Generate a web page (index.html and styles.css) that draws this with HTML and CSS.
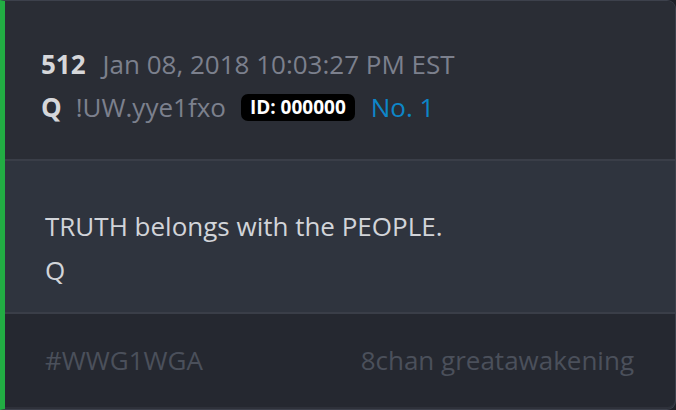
FILE: index.html
```
<!DOCTYPE html>
<html>
<head>
<meta charset="utf-8">
<link rel="stylesheet" href="styles.css">
</head>
<body>
<div class="card">
  <div class="head">
    <div class="row"><span class="num">512</span><span class="date">Jan 08, 2018 10:03:27 PM EST</span></div>
    <div class="row"><span class="name">Q</span><span class="trip">!UW.yye1fxo</span><span class="id">ID: 000000</span><span class="no">No. 1</span></div>
  </div>
  <div class="body">
    <div class="line">TRUTH belongs with the PEOPLE.</div>
    <div class="line">Q</div>
  </div>
  <div class="foot">
    <span class="tag">#WWG1WGA</span>
    <span class="src">8chan greatawakening</span>
  </div>
</div>
</body>
</html>
```
FILE: styles.css
```
html, body { margin: 0; padding: 0; background: #1f2128; }
body { font-family: "Open Sans", "DejaVu Sans", sans-serif; font-size: 26px; line-height: 43px; }
.card {
  width: 676px; height: 410px; box-sizing: border-box;
  border: 1px solid #3d414c; border-left: 5px solid #22ad43;
  border-radius: 0 9px 9px 0;
  display: flex; flex-direction: column; overflow: hidden;
  background: #252830;
  box-shadow: inset 0 -2px 0 #2e313a;
}
.head { background: #2a2d35; padding: 42px 20px 31px 36px; height: 160px; box-sizing: border-box; border-bottom: 2px solid #3a3e48; }
.row { display: flex; align-items: center; white-space: nowrap; }
.num { font-weight: 700; color: #d6d7da; }
.date { color: #7c808d; margin-left: 17px; }
.name { font-weight: 700; color: #d6d7da; }
.trip { color: #7c808d; margin-left: 14px; }
.id { background: #000; color: #fff; font-weight: 700; font-size: 19px; line-height: 27px; padding: 0 9px; border-radius: 7px; margin-left: 15px; }
.no { color: #0d86c8; margin-left: 16px; }
.body { background: #2f343e; padding: 43px 20px 0 40px; height: 153px; box-sizing: border-box; border-bottom: 2px solid #3a3e48; color: #d2d4d9; line-height: 44px; }
.foot { flex: 1; display: flex; justify-content: space-between; padding: 25px 41px 0 40px; color: #4b505b; }
```
